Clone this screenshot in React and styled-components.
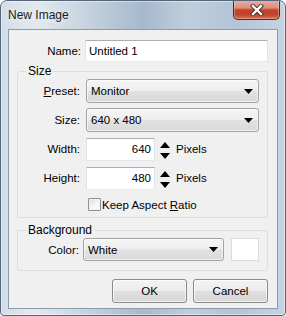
import React from "react";
import styled, { createGlobalStyle } from "styled-components";

const GlobalStyle = createGlobalStyle`
  html, body {
    margin: 0;
    padding: 0;
    background: #ffffff;
  }
  body {
    font-family: "Liberation Sans", Arial, sans-serif;
    font-size: 11.5px;
    color: #000;
  }
`;

const Window = styled.div`
  width: 286px;
  height: 316px;
  box-sizing: border-box;
  border: 1px solid #56667a;
  border-radius: 7px 7px 4px 4px;
  background:
    linear-gradient(
      to right,
      #d3dde8 0%,
      #e2e9f0 12%,
      #c3d0dd 32%,
      #a6b9cc 50%,
      #c0cedc 66%,
      #b3c4d6 82%,
      #c6d4e2 100%
    );
  box-shadow: inset 0 0 0 1px rgba(255, 255, 255, 0.45);
  display: flex;
  flex-direction: column;
  overflow: hidden;
`;

const TitleBar = styled.div`
  height: 28px;
  display: flex;
  align-items: flex-start;
  padding-left: 7px;
  flex-shrink: 0;
`;

const TitleText = styled.span`
  font-family: "Liberation Sans", Arial, sans-serif;
  font-size: 12px;
  line-height: 28px;
  color: #1b1b1b;
  text-shadow: 0 0 6px rgba(255, 255, 255, 0.9);
`;

const CloseButton = styled.div`
  margin-left: auto;
  margin-right: 5px;
  margin-top: -1px;
  width: 47px;
  height: 20px;
  box-sizing: border-box;
  border: 1px solid #5e2219;
  border-top: none;
  border-radius: 0 0 5px 5px;
  background: linear-gradient(
    #eab1a4 0%,
    #dc8d7b 42%,
    #c4442b 52%,
    #c2432b 75%,
    #d9704f 100%
  );
  box-shadow: inset 0 0 0 1px rgba(255, 255, 255, 0.3);
  display: flex;
  align-items: center;
  justify-content: center;
`;

const Client = styled.div`
  flex: 1;
  margin: 0 7px 6px;
  background: #f0f0f0;
  border: 1px solid #8b9bb0;
  display: flex;
  flex-direction: column;
  padding: 10px 9px 0 8px;
  min-height: 0;
`;

const Row = styled.div`
  display: flex;
  align-items: center;
  height: ${({ $h }) => $h || 24}px;
`;

const Label = styled.label`
  width: ${({ $w }) => $w}px;
  margin-right: ${({ $gap }) => $gap}px;
  text-align: right;
  flex-shrink: 0;
  white-space: nowrap;

  u {
    text-decoration: underline;
    text-underline-offset: 1px;
  }
`;

const TextBox = styled.div`
  box-sizing: border-box;
  height: ${({ $h }) => $h || 22}px;
  width: ${({ $w }) => ($w ? `${$w}px` : "auto")};
  flex: ${({ $w }) => ($w ? "none" : 1)};
  background: #fff;
  border: 1px solid #e2e3ea;
  border-top-color: #abadb3;
  border-bottom-color: #e3e9ef;
  display: flex;
  align-items: center;
  justify-content: ${({ $right }) => ($right ? "flex-end" : "flex-start")};
  padding: 0 3px;
`;

const Group = styled.fieldset`
  margin: ${({ $top }) => $top}px 0 0;
  padding: 1px 8px ${({ $bottom }) => $bottom}px 0;
  border: 1px solid #d5dfe5;
  border-radius: 3px;
  min-width: 0;
`;

const Legend = styled.legend`
  margin-left: 8px;
  padding: 0 2px;
  font-size: 12px;
  line-height: 13px;
`;

const GroupBody = styled.div`
  display: flex;
  flex-direction: column;
  gap: 5px;
`;

const Combo = styled.div`
  box-sizing: border-box;
  height: ${({ $h }) => $h || 24}px;
  width: ${({ $w }) => ($w ? `${$w}px` : "auto")};
  flex: ${({ $w }) => ($w ? "none" : 1)};
  border: 1px solid #a3a3a3;
  border-radius: 3px;
  background: linear-gradient(
    #f5f5f5 0%,
    #ededed 48%,
    #e2e2e2 52%,
    #d9d9d9 100%
  );
  box-shadow: inset 0 0 0 1px rgba(255, 255, 255, 0.6);
  display: flex;
  align-items: center;
  padding: 0 5px 0 4px;

  span {
    flex: 1;
  }
`;

const Spinner = styled.div`
  width: 17px;
  height: 22px;
  display: flex;
  flex-direction: column;
  align-items: center;
  justify-content: space-between;
  padding: 4px 0 1px;
  box-sizing: border-box;
  flex-shrink: 0;
  margin-left: 1px;
`;

const Unit = styled.span`
  margin-left: 3px;
`;

const CheckRow = styled.div`
  display: flex;
  align-items: center;
  height: 17px;
  margin-top: 1px;
  padding-left: 70px;

  u {
    text-decoration: underline;
    text-underline-offset: 1px;
  }
`;

const CheckBox = styled.span`
  width: 13px;
  height: 13px;
  box-sizing: border-box;
  border: 1px solid #8e8f8f;
  border-radius: 1px;
  background: linear-gradient(135deg, #dadbdc 0%, #f7f7f7 60%, #ffffff 100%);
  box-shadow: inset 0 0 0 1px #f3f3f3;
  margin-right: 1px;
  flex-shrink: 0;
`;

const Swatch = styled.div`
  width: 31px;
  height: 23px;
  box-sizing: border-box;
  margin-left: 7px;
  background: #fff;
  border: 1px solid #dcdcdc;
`;

const ButtonRow = styled.div`
  display: flex;
  justify-content: flex-end;
  gap: 6px;
  margin-top: 8px;
`;

const Button = styled.div`
  width: 75px;
  height: 24px;
  box-sizing: border-box;
  border: 1px solid #8a8a8a;
  border-radius: 3px;
  background: linear-gradient(
    #f3f3f3 0%,
    #ececec 48%,
    #dfdfdf 52%,
    #d6d6d6 100%
  );
  box-shadow: inset 0 0 0 1px rgba(255, 255, 255, 0.7);
  display: flex;
  align-items: center;
  justify-content: center;
`;

const Arrow = () => (
  <svg width="9" height="5" viewBox="0 0 9 5">
    <polygon points="0,0 9,0 4.5,5" fill="#000" />
  </svg>
);

const SpinUp = () => (
  <svg width="10" height="6" viewBox="0 0 10 6">
    <polygon points="0,6 10,6 5,0" fill="#000" />
  </svg>
);

const SpinDown = () => (
  <svg width="10" height="6" viewBox="0 0 10 6">
    <polygon points="0,0 10,0 5,6" fill="#000" />
  </svg>
);

const CloseGlyph = () => (
  <svg width="14" height="12" viewBox="0 0 14 12">
    <path d="M3 2 L11 10 M11 2 L3 10" stroke="#4a2b26" strokeWidth="4.2" strokeLinecap="square" />
    <path d="M3 2 L11 10 M11 2 L3 10" stroke="#ffffff" strokeWidth="2.4" strokeLinecap="square" />
  </svg>
);

function NumberField({ label, value }) {
  return (
    <Row>
      <Label $w={62} $gap={6}>{label}</Label>
      <TextBox $w={69} $h={23} $right>{value}</TextBox>
      <Spinner>
        <SpinUp />
        <SpinDown />
      </Spinner>
      <Unit>Pixels</Unit>
    </Row>
  );
}

export default function App() {
  return (
    <>
      <GlobalStyle />
      <Window>
        <TitleBar>
          <TitleText>New Image</TitleText>
          <CloseButton>
            <CloseGlyph />
          </CloseButton>
        </TitleBar>

        <Client>
          <Row $h={22}>
            <Label $w={64} $gap={4}>Name:</Label>
            <TextBox>Untitled 1</TextBox>
          </Row>

          {/* Size */}
          <Group $top={3} $bottom={4}>
            <Legend>Size</Legend>
            <GroupBody>
              <Row>
                <Label $w={62} $gap={6}>
                  <u>P</u>reset:
                </Label>
                <Combo>
                  <span>Monitor</span>
                  <Arrow />
                </Combo>
              </Row>
              <Row>
                <Label $w={62} $gap={6}>Size:</Label>
                <Combo>
                  <span>640 x 480</span>
                  <Arrow />
                </Combo>
              </Row>
              <NumberField label="Width:" value="640" />
              <NumberField label="Height:" value="480" />
              <CheckRow>
                <CheckBox />
                <span>
                  Keep Aspect <u>R</u>atio
                </span>
              </CheckRow>
            </GroupBody>
          </Group>

          {/* Background */}
          <Group $top={6} $bottom={9}>
            <Legend>Background</Legend>
            <Row $h={23}>
              <Label $w={61} $gap={4}>Color:</Label>
              <Combo $w={141} $h={23}>
                <span>White</span>
                <Arrow />
              </Combo>
              <Swatch />
            </Row>
          </Group>

          <ButtonRow>
            <Button>OK</Button>
            <Button>Cancel</Button>
          </ButtonRow>
        </Client>
      </Window>
    </>
  );
}
